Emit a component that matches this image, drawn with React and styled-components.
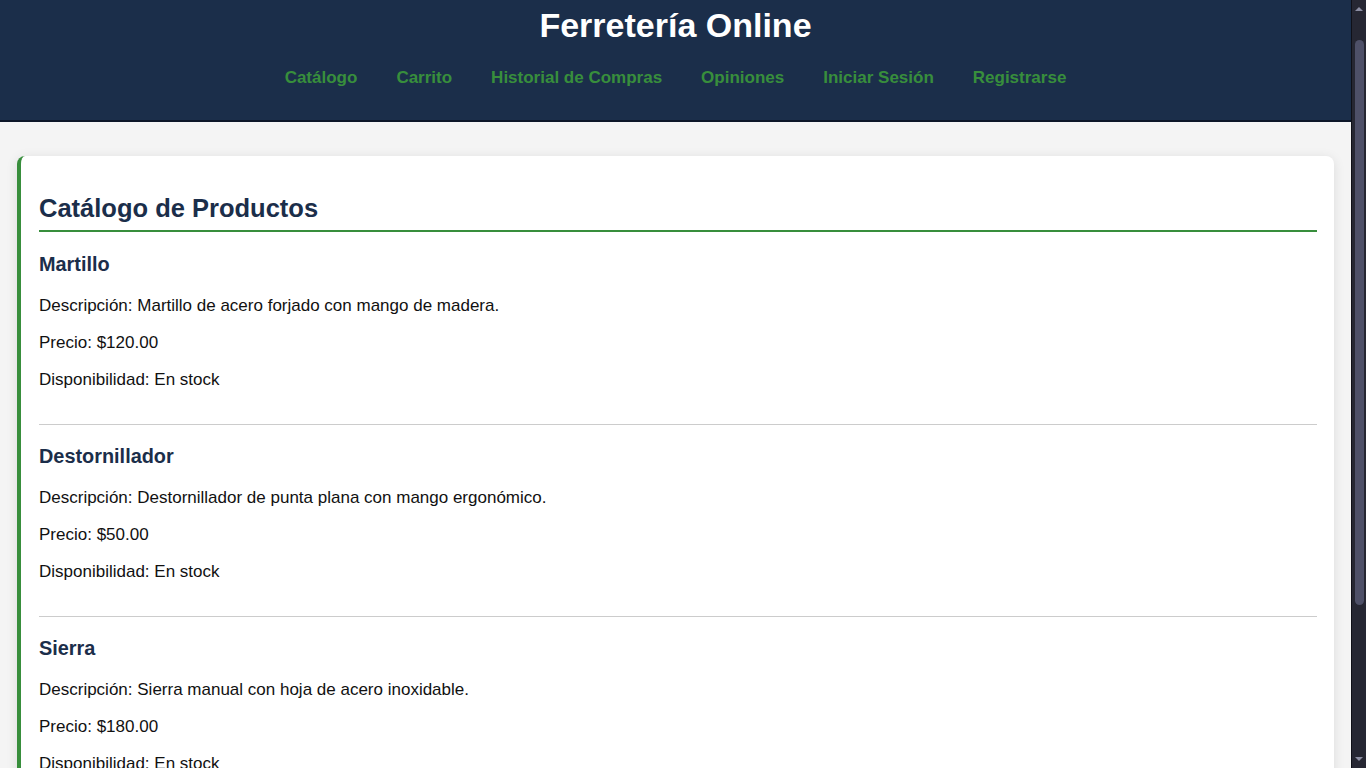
import React from 'react'
import styled, { createGlobalStyle } from 'styled-components'

const productos = [
  {
    nombre: 'Martillo',
    descripcion: 'Martillo de acero forjado con mango de madera.',
    precio: '$120.00',
    disponibilidad: 'En stock',
  },
  {
    nombre: 'Destornillador',
    descripcion: 'Destornillador de punta plana con mango ergonómico.',
    precio: '$50.00',
    disponibilidad: 'En stock',
  },
  {
    nombre: 'Sierra',
    descripcion: 'Sierra manual con hoja de acero inoxidable.',
    precio: '$180.00',
    disponibilidad: 'En stock',
  },
]

const links = ['Catálogo', 'Carrito', 'Historial de Compras', 'Opiniones', 'Iniciar Sesión', 'Registrarse']

const GlobalStyle = createGlobalStyle`
  body{
    margin:0;
    padding-right:15px;
    background:#f4f4f4;
    font-family:"Liberation Sans", Arial, sans-serif;
    font-size:17px;
    line-height:1.3;
    color:#111;
  }
`

const App = () => {
  return (
    <>
      <GlobalStyle />
      <Header>
        <Title>Ferretería Online</Title>
        <Nav>
          {links.map((l) => (
            <NavLink key={l} href="#">{l}</NavLink>
          ))}
        </Nav>
      </Header>
      <Main>
        <Card>
          <SectionTitle>Catálogo de Productos</SectionTitle>
          {productos.map((p) => (
            <Product key={p.nombre}>
              <h3>{p.nombre}</h3>
              <p>Descripción: {p.descripcion}</p>
              <p>Precio: {p.precio}</p>
              <p>Disponibilidad: {p.disponibilidad}</p>
            </Product>
          ))}
        </Card>
      </Main>
      <Footer>© 2024 Ferretería Online. Todos los derechos reservados.</Footer>
      <ScrollTrack>
        <Arrow />
        <Thumb />
        <Arrow down />
      </ScrollTrack>
    </>
  )
}

export default App

const Header = styled.header`
  background:#1b2e4a;
  padding:3px 0 31px;
  border-bottom:2px solid #0c1628;
  text-align:center;
`
const Title = styled.h1`
  margin:0;
  color:#fff;
  font-size:2em;
  font-weight:bold;
`
const Nav = styled.nav`
  margin-top:20px;
  display:flex;
  justify-content:center;
  gap:39px;
`
const NavLink = styled.a`
  color:#388e3c;
  font-size:1em;
  font-weight:bold;
  text-decoration:none;
`
const Main = styled.main`
  padding:34px 17px 20px;
`
const Card = styled.section`
  background:#fff;
  border-left:4px solid #388e3c;
  border-radius:8px;
  box-shadow:0 2px 12px rgba(0,0,0,0.1);
  padding:20px 17px 20px 18px;
`
const SectionTitle = styled.h2`
  margin:17px 0 1px;
  padding-bottom:6px;
  font-size:1.5em;
  line-height:31px;
  color:#1b2e4a;
  border-bottom:2px solid #388e3c;
`
const Product = styled.div`
  padding:19px 0 34px;
  border-bottom:1px solid #ccc;
  h3{
    margin:0 0 20px;
    font-size:1.17em;
    line-height:24px;
    color:#1b2e4a;
  }
  p{
    margin:0 0 17px;
    line-height:20px;
    color:#111;
  }
  p:last-child{
    margin-bottom:0;
  }
`
const Footer = styled.footer`
  background:#1b2e4a;
  color:#fff;
  text-align:center;
  padding:20px;
  font-size:14px;
`
/* stand-in for the browser's classic scrollbar, which headless mode hides */
const ScrollTrack = styled.div`
  position:fixed;
  top:0;
  right:0;
  width:15px;
  height:100vh;
  background:#262733;
  border-left:1px solid #0f1018;
  box-sizing:border-box;
  display:flex;
  flex-direction:column;
  align-items:center;
`
const Arrow = styled.div`
  width:0;
  height:0;
  margin:${(p) => (p.down ? 'auto 0 7px' : '7px 0 0')};
  border-left:4px solid transparent;
  border-right:4px solid transparent;
  ${(p) => (p.down ? 'border-top:4px solid #8c8ea3;' : 'border-bottom:4px solid #8c8ea3;')}
`
const Thumb = styled.div`
  margin-top:29px;
  width:9px;
  height:565px;
  border-radius:5px;
  background:#4e5068;
`
